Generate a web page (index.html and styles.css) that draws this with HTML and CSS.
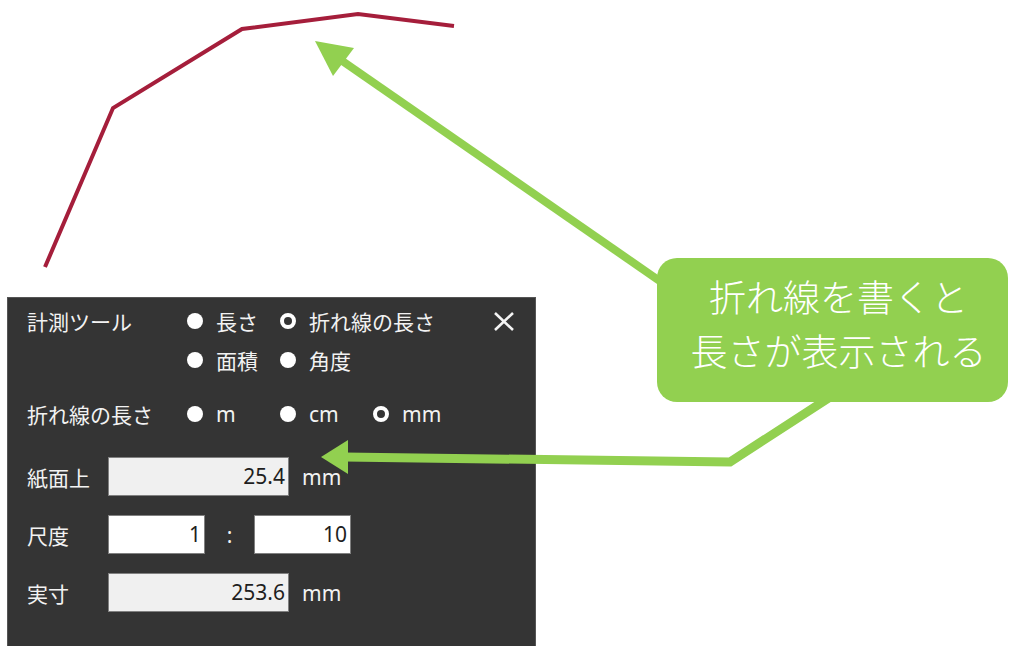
FILE: index.html
```html
<!DOCTYPE html>
<html lang="ja">

<head>
    <meta charset="UTF-8">
    <meta name="viewport" content="width=device-width, initial-scale=1.0">
    <title>計測ツール</title>
    <link rel="stylesheet" href="styles.css">
</head>

<body>
    <div class="stage">
        <div class="panel">
            <div class="row tool-row">
                <span class="label">計測ツール</span>
                <label class="opt"><span class="dot"></span>長さ</label>
                <label class="opt"><span class="dot on"></span>折れ線の長さ</label>
                <button class="close" aria-label="閉じる">
                    <svg width="20" height="19" viewBox="0 0 20 19">
                        <path d="M1 1 L19 18 M19 1 L1 18" stroke="#f4f4f4" stroke-width="2.6" fill="none" />
                    </svg>
                </button>
            </div>
            <div class="row tool-row2">
                <span class="label"></span>
                <label class="opt"><span class="dot"></span>面積</label>
                <label class="opt"><span class="dot"></span>角度</label>
            </div>
            <div class="row unit-row">
                <span class="label">折れ線の長さ</span>
                <label class="opt"><span class="dot"></span>m</label>
                <label class="opt"><span class="dot"></span>cm</label>
                <label class="opt"><span class="dot on"></span>mm</label>
            </div>
            <div class="row field-row">
                <span class="field-label">紙面上</span>
                <span class="box readonly wide">25.4</span>
                <span class="unit">mm</span>
            </div>
            <div class="row field-row">
                <span class="field-label">尺度</span>
                <span class="box narrow">1</span>
                <span class="colon">:</span>
                <span class="box narrow">10</span>
            </div>
            <div class="row field-row">
                <span class="field-label">実寸</span>
                <span class="box readonly wide">253.6</span>
                <span class="unit">mm</span>
            </div>
        </div>

        <svg class="marks" width="1011" height="646" viewBox="0 0 1011 646">
            <!-- drawn polyline -->
            <polyline points="45,267 113,108 242,29 358,14 454,26" fill="none" stroke="#a51e3b" stroke-width="4" />
            <!-- arrow to the line -->
            <line x1="338" y1="58" x2="690" y2="302" stroke="#92d050" stroke-width="8" />
            <polygon points="315,41 354,48 333,76" fill="#92d050" />
            <!-- arrow to the length -->
            <polyline points="841,390 730,462 344,457" fill="none" stroke="#92d050" stroke-width="9" />
            <polygon points="321,457 348,440 348,474" fill="#92d050" />
        </svg>

        <div class="callout">折れ線を書くと<br>長さが表示される</div>
    </div>
</body>

</html>
```

FILE: styles.css
```css
body {
    margin: 0;
    background-color: white;
    font-family: "Noto Sans", "Noto Sans CJK JP", sans-serif;
}

.stage {
    position: relative;
    width: 1011px;
    height: 646px;
    overflow: hidden;
}

.panel {
    box-sizing: border-box;
    width: 529px;
    height: 370px;
    margin: 297px 0 0 7px;
    padding: 8px 21px 0 19px;
    background-color: #343434;
    border: 1px solid #555555;
    color: #f2f2f2;
    font-size: 21px;
}

.row {
    display: flex;
    align-items: center;
    height: 30px;
}

.tool-row {
    margin-bottom: 9px;
}

.tool-row2 {
    margin-bottom: 24px;
}

.unit-row {
    margin-bottom: 28px;
}

.field-row {
    height: 39px;
    margin-bottom: 19px;
}

.label {
    width: 160px;
    flex-shrink: 0;
}

.opt {
    display: flex;
    align-items: center;
    width: 93px;
    flex-shrink: 0;
    white-space: nowrap;
}

.dot {
    box-sizing: border-box;
    flex-shrink: 0;
    width: 16px;
    height: 16px;
    margin-right: 13px;
    border-radius: 50%;
    background-color: #ffffff;
}

.dot.on {
    background-color: transparent;
    border: 4px solid #ffffff;
}

.close {
    margin-left: auto;
    padding: 0;
    border: none;
    background: none;
    display: flex;
}

.field-label {
    width: 81px;
    flex-shrink: 0;
}

.box {
    box-sizing: border-box;
    height: 39px;
    line-height: 37px;
    padding-right: 3px;
    text-align: right;
    color: #1e1e1e;
    background-color: #ffffff;
    border: 1px solid #808080;
}

.box.readonly {
    background-color: #f0f0f0;
}

.wide {
    width: 181px;
}

.narrow {
    width: 97px;
}

.colon {
    width: 49px;
    text-align: center;
}

.unit {
    margin-left: 13px;
}

.marks {
    position: absolute;
    top: 0;
    left: 0;
    pointer-events: none;
}

.callout {
    position: absolute;
    left: 657px;
    top: 258px;
    box-sizing: border-box;
    width: 351px;
    height: 144px;
    padding: 11px 0 0 12px;
    border-radius: 20px;
    background-color: #92d050;
    color: #ffffff;
    font-family: "Noto Sans CJK JP", sans-serif;
    font-weight: 300;
    font-size: 37px;
    line-height: 54px;
    text-align: center;
}
```
